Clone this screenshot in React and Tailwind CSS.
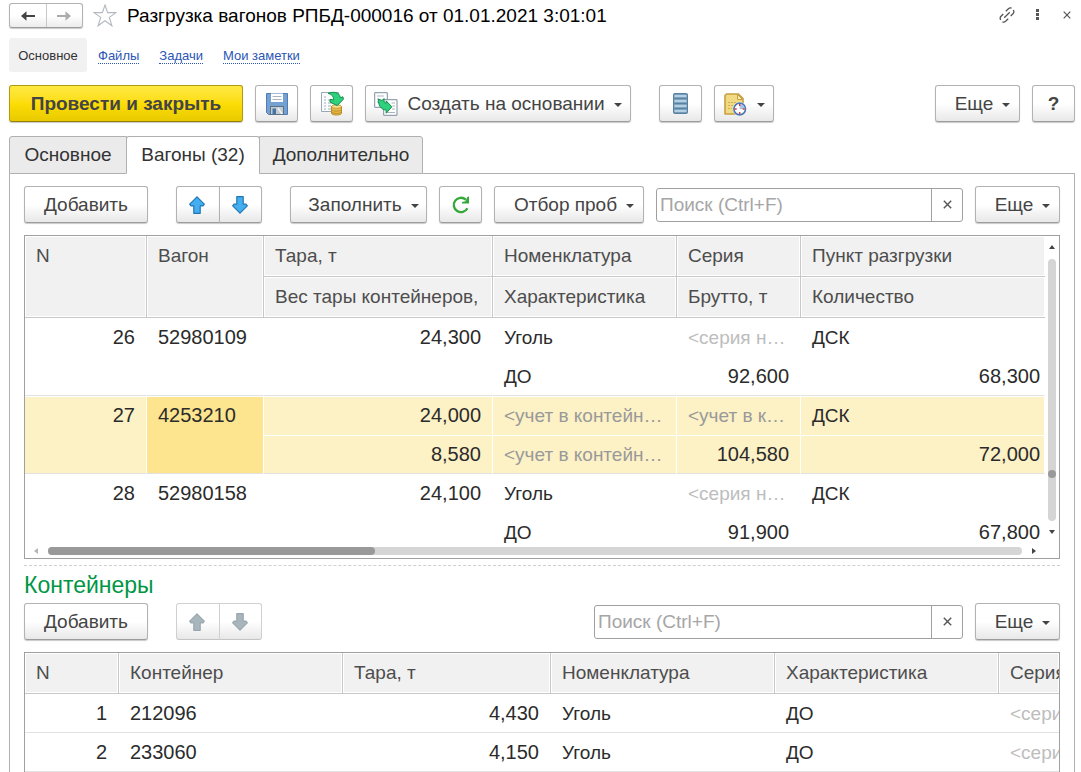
import React from "react";

const BTN =
  "flex h-[37px] shrink-0 items-center justify-center rounded-[3px] border border-[#b2b2b2] border-b-[#9c9c9c] bg-linear-to-b from-white from-50% to-[#e8e8e8] text-[19px] text-[#444] shadow-[0_1px_1px_#c9c9c9]";

function Caret() {
  return (
    <svg width="8" height="4" viewBox="0 0 8 4" className="mt-0.5 shrink-0" aria-hidden="true">
      <path d="M0 0H8L4 4Z" fill="#444" />
    </svg>
  );
}

function MenuButton({ children, className, label }) {
  return (
    <button type="button" aria-label={label} aria-haspopup="menu" className={BTN + " pt-px " + className}>
      {children}
      <Caret />
    </button>
  );
}

function MoreButton() {
  return <MenuButton className="w-[85px] gap-[9px] pl-[10px]">Еще</MenuButton>;
}

function Arrow({ down, disabled }) {
  return (
    <svg width="16" height="18" viewBox="0 0 16 18" aria-hidden="true" className={down ? "rotate-180" : ""}>
      <path
        d="M8 .8L15.3 8.2L14 9.9H11.2V17.3H4.8V9.9H2L.7 8.2Z"
        fill={disabled ? "#a9b5bc" : "#45aef0"}
        stroke={disabled ? "#9aa7ae" : "#1f78b4"}
        strokeWidth="1.2"
        strokeLinejoin="round"
      />
    </svg>
  );
}

function MoveButtons({ disabled }) {
  const tone = disabled ? " border-[#d0d0d0] border-b-[#c4c4c4] shadow-none" : "";
  return (
    <div className="flex">
      <button type="button" disabled={disabled} aria-label="Переместить вверх" className={BTN + " w-11 rounded-r-none pr-0.5" + tone}>
        <Arrow disabled={disabled} />
      </button>
      <button type="button" disabled={disabled} aria-label="Переместить вниз" className={BTN + " -ml-px w-[43px] rounded-l-none pr-0.5" + tone}>
        <Arrow down disabled={disabled} />
      </button>
    </div>
  );
}

function Search({ className }) {
  return (
    <div className={"flex h-[34px] min-w-0 rounded-[3px] border border-[#a0a0a0] bg-white " + className}>
      <input
        type="text"
        aria-label="Поиск"
        placeholder="Поиск (Ctrl+F)"
        className="min-w-0 flex-1 bg-transparent pt-0.5 pl-[3px] text-[19px] text-[#333] outline-none placeholder:text-[#a6a6a6]"
      />
      <button type="button" aria-label="Очистить" className="flex w-[31px] items-center justify-center border-l border-[#a0a0a0]">
        <svg width="9" height="9" viewBox="0 0 9 9" aria-hidden="true">
          <path d="M.8 .8L8.2 8.2M8.2 .8L.8 8.2" stroke="#555" strokeWidth="1.4" />
        </svg>
      </button>
    </div>
  );
}

function SaveIcon() {
  return (
    <svg width="22" height="22" viewBox="0 0 22 22" aria-hidden="true">
      <path d="M.5 .5H21.5V21.5H2.5L.5 19.5Z" fill="#74a1d2" stroke="#4f7db3" />
      <rect x="5" y=".5" width="12" height="8.5" fill="#fff" />
      <path d="M6.5 3.5H15.5M6.5 6.5H15.5" stroke="#a9b4bf" />
      <rect x="4.5" y="13.5" width="13" height="8" fill="#c3ccd2" stroke="#5b7288" />
      <rect x="6.5" y="15.5" width="3.5" height="5.5" fill="#4573a4" />
      <path d="M12 15L16 21" stroke="#eef1f3" strokeWidth="1.5" />
    </svg>
  );
}

function PostIcon() {
  return (
    <svg width="24" height="25" viewBox="0 0 24 25" aria-hidden="true">
      <path d="M1.5 1.5H18.5V20.5H1.5Z" fill="#fbfcfd" stroke="#9aa8b5" />
      <path d="M4 6H6M4 9H6M4 12H6M4 15H6M4 18H6M8 9H12M8 12H13M8 15H11M8 18H11" stroke="#9fb0c0" />
      <path d="M11.5 15.5V22.2C11.5 24.6 21.5 24.6 21.5 22.2V15.5Z" fill="#e9bd4f" stroke="#bd8c22" />
      <path d="M11.5 18.7C12.5 20.6 20.5 20.6 21.5 18.7M11.5 21C12.5 22.8 20.5 22.8 21.5 21" fill="none" stroke="#bd8c22" />
      <ellipse cx="16.5" cy="15.6" rx="5" ry="1.8" fill="#f7df8e" stroke="#bd8c22" strokeWidth=".8" />
      <path d="M8 2.4C12 .6 19.5 .4 20.4 6.8L22.9 5.8L23.4 8.2L17.2 14.6L10 11V8.4L13.6 8.9C13.8 5.6 11.8 3.2 8 2.4Z" fill="#2fd27c" stroke="#138a4b" strokeLinejoin="round" />
    </svg>
  );
}

function CreateIcon() {
  return (
    <svg width="24" height="24" viewBox="0 0 24 24" aria-hidden="true">
      <path d="M.7 .7H13.3V15.3H.7Z" fill="#fff" stroke="#7d8f9f" />
      <path d="M3 4H10M3 7H5M3 10H5" stroke="#a9b5c0" />
      <path d="M9.7 7.7H23V23.3H9.7Z" fill="#fff" stroke="#7d8f9f" />
      <path d="M17.5 11H21M18.5 14H21M18 17H21M12 20.5H21" stroke="#a9b5c0" />
      <path d="M4.3 7.2L8 8.4L10.2 6.6C9.6 9.6 10.2 11 12.2 11.2V8.8L17.8 14.8L12.2 21.2V18C7 17.6 4.3 13.5 4.3 7.2Z" fill="#2fd27c" stroke="#138a4b" strokeLinejoin="round" />
    </svg>
  );
}

function ListIcon() {
  return (
    <svg width="15" height="21" viewBox="0 0 15 21" aria-hidden="true">
      <rect x=".6" y=".6" width="13.8" height="19.8" rx="1.4" fill="#7fa4c0" stroke="#5681a1" strokeWidth="1.2" />
      <path d="M1.5 3H13.5M1.5 8H13.5M1.5 13H13.5M1.5 18H13.5" stroke="#b4cfe1" strokeWidth="2.2" />
      <path d="M1.5 5.5H13.5M1.5 10.5H13.5M1.5 15.5H13.5" stroke="#5681a1" />
    </svg>
  );
}

function ScheduleIcon() {
  return (
    <svg width="23" height="23" viewBox="0 0 23 23" aria-hidden="true">
      <path d="M2.5 1H14.5L19 5.5V21H1V2.5Z" fill="#f2d984" stroke="#c6a040" strokeWidth="1.6" strokeLinejoin="round" />
      <path d="M13.5 1.5V6.5H18.5Z" fill="#fbedb8" stroke="#c6a040" />
      <path d="M4 9.5H12M4 12.5H9M4 15.5H8" stroke="#d3b055" strokeDasharray="2 1" />
      <circle cx="15.7" cy="16" r="6.9" fill="#fff" />
      <circle cx="15.7" cy="16" r="5.8" fill="#fff" stroke="#4a79b5" strokeWidth="1.7" />
      <path d="M15.7 16V11.1A4.9 4.9 0 0 1 20.6 16Z" fill="#a9c3e6" />
      <path d="M15.7 11V13M15.7 19V21M10.7 16H12.7M18.7 16H20.7" stroke="#e03a3a" strokeWidth="1.4" />
    </svg>
  );
}

function RefreshIcon() {
  return (
    <svg width="20" height="20" viewBox="0 0 20 20" aria-hidden="true">
      <path d="M16.4 13.2A7.2 7.2 0 1 1 14.8 4.6" fill="none" stroke="#34a93a" strokeWidth="2.3" />
      <path d="M18 1.5V8.6H11V7L14.3 6.2L16.6 1.7Z" fill="#34a93a" />
    </svg>
  );
}

function NavArrow({ right }) {
  return (
    <svg width="14" height="10" viewBox="0 0 14 10" aria-hidden="true" className={right ? "rotate-180" : ""}>
      <path d="M0 5L5.5 .3V3.9H14V6.1H5.5V9.7Z" fill={right ? "#ababab" : "#444"} />
    </svg>
  );
}

const HEAD = "truncate border-r border-b border-[#c8c8c8] bg-[#f1f1f1] pr-0 pl-[11px] text-left align-top leading-10 font-normal text-[#4d4d4d] shadow-[inset_0_0_0_1px_#fff]";

const wagons = [
  { n: 26, wagon: "52980109", tare: "24,300", boxes: "", item: "Уголь", kind: "ДО", series: "<серия н…", gross: "92,600", place: "ДСК", qty: "68,300" },
  { n: 27, wagon: "4253210", tare: "24,000", boxes: "8,580", item: "<учет в контейн…", kind: "<учет в контейн…", series: "<учет в к…", gross: "104,580", place: "ДСК", qty: "72,000", active: true },
  { n: 28, wagon: "52980158", tare: "24,100", boxes: "", item: "Уголь", kind: "ДО", series: "<серия н…", gross: "91,900", place: "ДСК", qty: "67,800" },
];

function WagonRows({ row }) {
  const on = row.active;
  const cell = "truncate border-r pt-px leading-[37px] " + (on ? "border-r-white shadow-[inset_0_1px_0_#fff] " : "border-r-transparent ");
  const fill = on ? "bg-[#fdf1c6] " : "";
  const top = cell + fill + "border-b " + (on ? "border-b-[#fdf1c6] " : "border-b-transparent ");
  const tall = cell + "border-b border-b-[#e2e2e2] align-top ";
  const low = cell + fill + "border-b border-b-[#e2e2e2] ";
  const note = on ? "text-[#999] " : "text-[#bdbdbd] ";
  const left = "pl-[11px] ";
  const right = "pr-[11px] text-right text-[20px] ";
  const noted = (v) => (v.startsWith("<") ? note : "");
  return (
    <>
      <tr>
        <td rowSpan={2} className={tall + fill + right}>{row.n}</td>
        <td rowSpan={2} className={tall + left + "text-[20px] " + (on ? "bg-[#fde48e]" : "")}>{row.wagon}</td>
        <td className={top + right}>{row.tare}</td>
        <td className={top + left + noted(row.item)}>{row.item}</td>
        <td className={top + left + noted(row.series)}>{row.series}</td>
        <td className={top + left}>{row.place}</td>
      </tr>
      <tr>
        <td className={low + right}>{row.boxes}</td>
        <td className={low + left + noted(row.kind)}>{row.kind}</td>
        <td className={low + right}>{row.gross}</td>
        <td className={low + "pr-1 text-right text-[20px]"}>{row.qty}</td>
      </tr>
    </>
  );
}

const containers = [
  { n: 1, code: "212096", tare: "4,430" },
  { n: 2, code: "233060", tare: "4,150" },
];

export default function App() {
  const tab = "flex h-[38px] items-center justify-center border border-[#b0b0b0] text-[19px] text-[#333] ";
  const link = "border-b border-dotted border-[#2a56b5] leading-[14px]";
  return (
    <main className="flex flex-col bg-white pr-[6px] pl-[9px] font-['Liberation_Sans',Arial,sans-serif] text-[19px] text-[#2b2b2b]">
      <header className="flex h-[31px] items-center">
        <div className="flex h-[25px] w-[74px] rounded-[3px] border border-[#b2b2b2] border-b-[#9c9c9c] bg-linear-to-b from-white from-50% to-[#ececec] shadow-[0_1px_1px_#c9c9c9]">
          <button type="button" aria-label="Назад" className="flex flex-1 items-center justify-center border-r border-[#c8c8c8]"><NavArrow /></button>
          <button type="button" aria-label="Вперед" className="flex flex-1 items-center justify-center"><NavArrow right /></button>
        </div>
        <button type="button" aria-label="В избранное" className="ml-[10px]">
          <svg width="24" height="23" viewBox="0 0 24 23" aria-hidden="true">
            <path d="M12 1L14.6 8.6H23L16.3 13.4L18.9 21.8L12 16.8L5.1 21.8L7.7 13.4L1 8.6H9.4Z" fill="#fff" stroke="#b3b9c1" strokeWidth="1.1" />
          </svg>
        </button>
        <h1 className="ml-[10px] flex-1 truncate pt-0.5 text-[19px] text-black">Разгрузка вагонов РПБД-000016 от 01.01.2021 3:01:01</h1>
        <div className="flex items-center gap-4 pb-0.5">
          <button type="button" aria-label="Ссылка" className="flex w-4 justify-center">
            <svg width="16" height="16" viewBox="0 0 16 16" aria-hidden="true" fill="none" stroke="#555" strokeWidth="1.3">
              <path d="M5.2 10.8L10.8 5.2M6.8 4.2L9.4 1.7A3.1 3.1 0 0 1 12.6 1.2M14.3 3A3.1 3.1 0 0 1 14.2 6.5L11.7 9M9.2 11.8L6.6 14.3A3.1 3.1 0 0 1 3.4 14.8M1.7 13A3.1 3.1 0 0 1 1.8 9.5L4.3 7" />
            </svg>
          </button>
          <button type="button" aria-label="Меню" className="flex w-3 justify-center">
            <svg width="3" height="11" viewBox="0 0 3 11" aria-hidden="true" fill="#555"><path d="M0 0H3V3H0ZM0 4H3V7H0ZM0 8H3V11H0Z" /></svg>
          </button>
          <button type="button" aria-label="Закрыть" className="flex w-4 justify-center">
            <svg width="8" height="8" viewBox="0 0 8 8" aria-hidden="true"><path d="M.7 .7L7.3 7.3M7.3 .7L.7 7.3" stroke="#555" strokeWidth="1.2" /></svg>
          </button>
        </div>
      </header>

      <nav className="mt-[7px] flex h-[34px] items-center pt-0.5 text-[13px] text-[#2a56b5]">
        <a href="#main" className="-mt-0.5 flex h-[34px] w-[78px] items-center justify-center rounded-[3px] bg-[#f1f1f1] pt-0.5 text-[#333]">Основное</a>
        <a href="#files" className={"ml-[11px] " + link}>Файлы</a>
        <a href="#tasks" className={"ml-5 " + link}>Задачи</a>
        <a href="#notes" className={"ml-5 " + link}>Мои заметки</a>
      </nav>

      <div className="mt-[13px] flex gap-3">
        <button type="button" className="flex h-[37px] w-[234px] shrink-0 items-center justify-center rounded-[3px] border border-[#b09a10] border-b-[#948008] bg-linear-to-b from-[#ffe940] via-[#fcdd05] to-[#e9ca00] pt-px text-[19px] font-bold text-[#444] shadow-[0_1px_1px_#c9c9c9]">
          Провести и закрыть
        </button>
        <button type="button" aria-label="Записать" className={BTN + " w-[43px]"}><SaveIcon /></button>
        <button type="button" aria-label="Провести" className={BTN + " w-[43px]"}><PostIcon /></button>
        <MenuButton className="w-[266px] gap-[9px]"><CreateIcon /><span>Создать на основании</span></MenuButton>
        <button type="button" aria-label="Список" className={BTN + " ml-4 w-[43px]"}><ListIcon /></button>
        <MenuButton label="Расписание" className="w-[60px] gap-2.5"><ScheduleIcon /></MenuButton>
        <div className="ml-auto flex gap-3">
          <MoreButton />
          <button type="button" aria-label="Справка" className={BTN + " w-[43px] pt-px font-bold"}>?</button>
        </div>
      </div>

      <div className="mt-[14px] flex" role="tablist">
        <button type="button" role="tab" className={tab + "w-[118px] rounded-tl-[3px] bg-[#ebebeb]"}>Основное</button>
        <button type="button" role="tab" aria-selected="true" className={tab + "-ml-px w-[134px] rounded-t-[3px] border-b-white bg-white"}>Вагоны (32)</button>
        <button type="button" role="tab" className={tab + "-ml-px w-[164px] rounded-tr-[3px] bg-[#ebebeb]"}>Дополнительно</button>
        <div className="flex-1 border-b border-[#b0b0b0]" />
      </div>

      <section className="border-x border-[#b0b0b0] px-[14px] pt-3">
        <div className="flex items-center gap-3">
          <button type="button" className={BTN + " w-[124px] pt-px"}>Добавить</button>
          <div className="mx-4"><MoveButtons /></div>
          <MenuButton className="w-[137px] gap-[9px] pl-[10px]">Заполнить</MenuButton>
          <button type="button" aria-label="Обновить" className={BTN + " w-[43px]"}><RefreshIcon /></button>
          <MenuButton className="w-[150px] gap-[9px] pl-[10px]">Отбор проб</MenuButton>
          <Search className="flex-1" />
          <MoreButton />
        </div>

        <div className="mt-3 border border-[#a0a0a0]">
          <div className="flex">
            <div className="min-w-0 flex-1">
              <table className="w-full table-fixed border-separate border-spacing-0">
                <colgroup>
                  <col className="w-[122px]" />
                  <col className="w-[117px]" />
                  <col className="w-[229px]" />
                  <col className="w-[184px]" />
                  <col className="w-[124px]" />
                  <col />
                </colgroup>
                <thead>
                  <tr>
                    <th rowSpan={2} className={HEAD}>N</th>
                    <th rowSpan={2} className={HEAD}>Вагон</th>
                    <th className={HEAD}>Тара, т</th>
                    <th className={HEAD}>Номенклатура</th>
                    <th className={HEAD}>Серия</th>
                    <th className={HEAD + " border-r-0"}>Пункт разгрузки</th>
                  </tr>
                  <tr>
                    <th className={HEAD}>Вес тары контейнеров,</th>
                    <th className={HEAD}>Характеристика</th>
                    <th className={HEAD}>Брутто, т</th>
                    <th className={HEAD + " border-r-0"}>Количество</th>
                  </tr>
                </thead>
                <tbody>
                  {wagons.map((row) => <WagonRows key={row.n} row={row} />)}
                </tbody>
              </table>
            </div>
            <div className="flex w-[14px] shrink-0 flex-col items-center pt-[9px] pb-[18px]">
              <svg width="6" height="4" viewBox="0 0 6 4" aria-hidden="true"><path d="M0 4H6L3 0Z" fill="#444" /></svg>
              <div className="mt-[10px] mb-[9px] flex w-2 flex-1 flex-col rounded-full bg-[#d5d5d5] pb-[43px]">
                <div className="mt-auto size-2 rounded-full bg-[#999]" />
              </div>
              <svg width="6" height="4" viewBox="0 0 6 4" aria-hidden="true"><path d="M0 0H6L3 4Z" fill="#444" /></svg>
            </div>
          </div>
          <div className="relative -mt-[5px] mb-[3px] flex h-2 items-center bg-white pr-[23px] pl-[9px]">
            <svg width="4" height="6" viewBox="0 0 4 6" aria-hidden="true"><path d="M4 0V6L0 3Z" fill="#b5b5b5" /></svg>
            <div className="mx-[10px] h-2 flex-1 rounded-full bg-[#d5d5d5]">
              <div className="h-2 w-[327px] rounded-full bg-[#999]" />
            </div>
            <svg width="4" height="6" viewBox="0 0 4 6" aria-hidden="true"><path d="M0 0V6L4 3Z" fill="#444" /></svg>
          </div>
        </div>

        <div className="mt-[6px] border-t border-dashed border-[#d0d0d0]" />
        <h2 className="mt-[5px] h-8 text-[23px] leading-[29px] text-[#009646]">Контейнеры</h2>

        <div className="flex items-center gap-3">
          <button type="button" className={BTN + " w-[124px] pt-px"}>Добавить</button>
          <div className="ml-4"><MoveButtons disabled /></div>
          <Search className="ml-auto w-[369px]" />
          <MoreButton />
        </div>

        <div className="mt-3 overflow-hidden border border-b-0 border-[#a0a0a0]">
          <table className="w-full table-fixed border-separate border-spacing-0">
            <colgroup>
              <col className="w-[94px]" />
              <col className="w-[224px]" />
              <col className="w-[208px]" />
              <col className="w-[224px]" />
              <col className="w-[224px]" />
              <col />
            </colgroup>
            <thead>
              <tr>
                {["N", "Контейнер", "Тара, т", "Номенклатура", "Характеристика"].map((t) => (
                  <th key={t} className={HEAD}>{t}</th>
                ))}
                <th className="overflow-hidden border-b border-[#c8c8c8] bg-[#f1f1f1] pl-[11px] text-left leading-10 font-normal whitespace-nowrap text-[#4d4d4d] shadow-[inset_0_0_0_1px_#fff]">Серия</th>
              </tr>
            </thead>
            <tbody className="leading-[37px] *:*:overflow-hidden *:*:border-b *:*:border-[#e2e2e2] *:*:pt-px *:*:whitespace-nowrap">
              {containers.map((row) => (
                <tr key={row.n}>
                  <td className="pr-3 text-right text-[20px]">{row.n}</td>
                  <td className="pl-[11px] text-[20px]">{row.code}</td>
                  <td className="pr-3 text-right text-[20px]">{row.tare}</td>
                  <td className="pl-[11px]">Уголь</td>
                  <td className="pl-[11px]">ДО</td>
                  <td className="pl-[11px] text-[#bdbdbd]">&lt;серия</td>
                </tr>
              ))}
            </tbody>
          </table>
        </div>
      </section>
    </main>
  );
}
